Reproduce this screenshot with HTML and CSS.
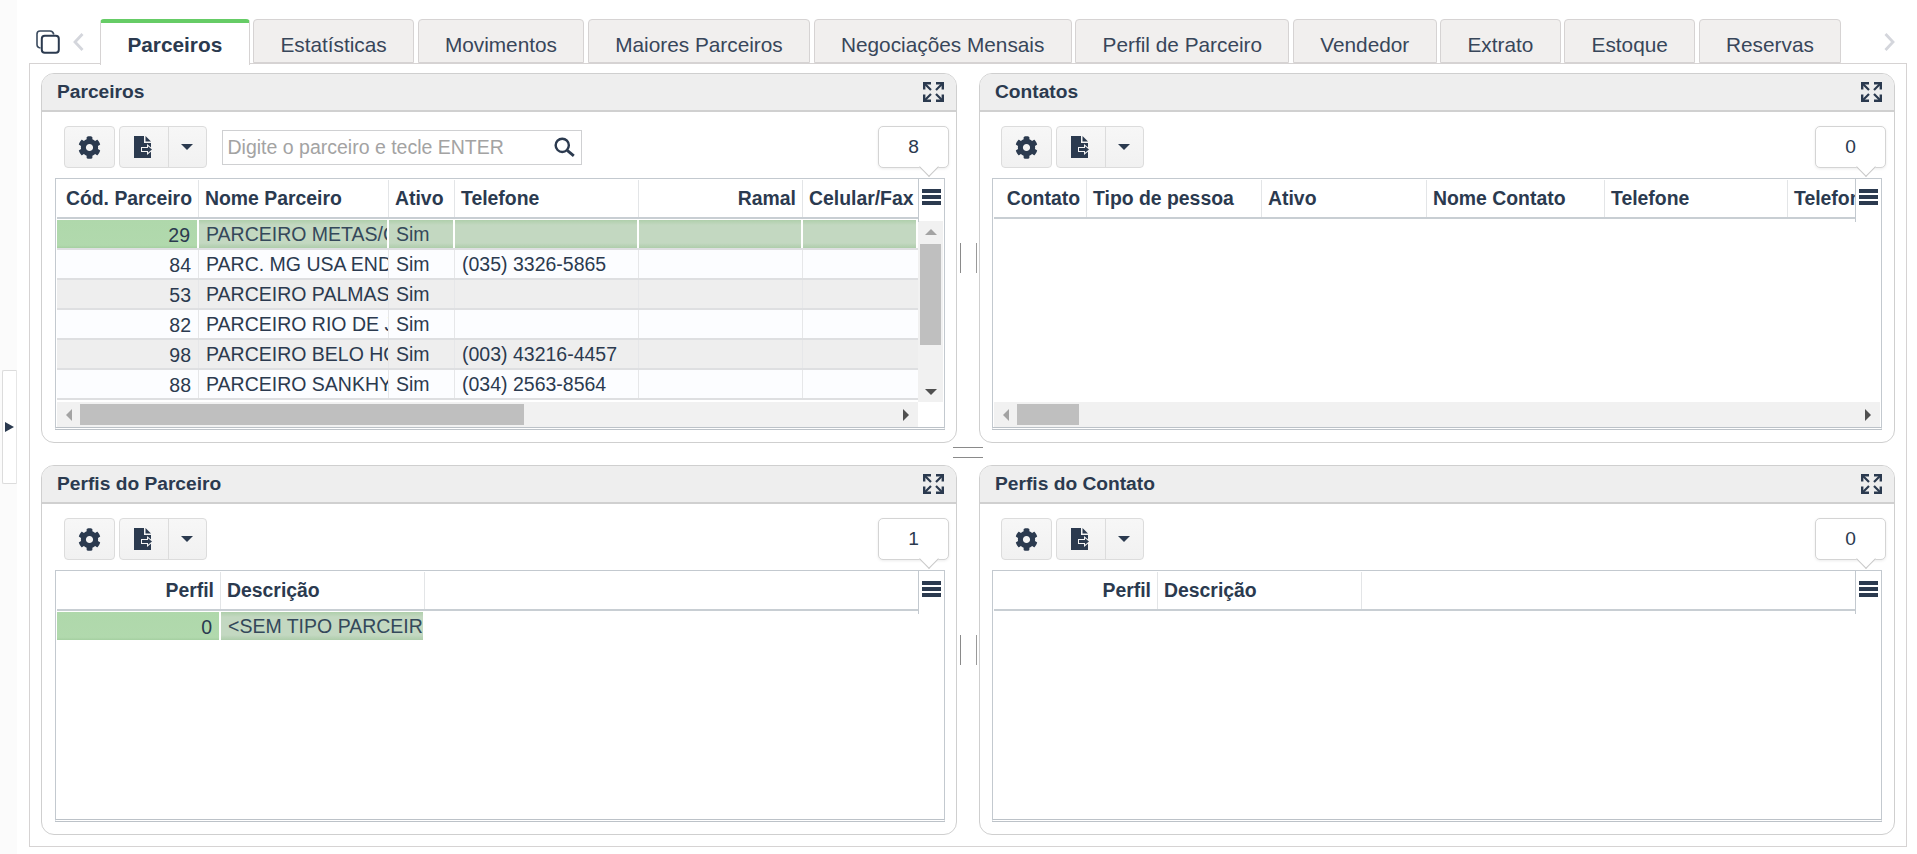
FILE: index.html
```html
<!DOCTYPE html>
<html lang="pt-BR">
<head>
<meta charset="utf-8">
<title>Parceiros</title>
<link rel="stylesheet" href="styles.css">
</head>
<body>
<svg class="sprite" aria-hidden="true">
  <symbol id="i-gear" viewBox="0 0 512 512"><path d="M487.4 315.7l-42.6-24.6c4.3-23.2 4.3-47 0-70.2l42.6-24.6c4.9-2.8 7.1-8.6 5.5-14-11.1-35.6-30-67.8-54.7-94.6-3.8-4.1-10-5.1-14.8-2.3L380.8 110c-17.9-15.4-38.5-27.3-60.8-35.1V25.8c0-5.6-3.9-10.5-9.4-11.7-36.7-8.2-74.3-7.8-109.2 0-5.5 1.2-9.4 6.1-9.4 11.7V75c-22.2 7.9-42.8 19.8-60.8 35.1L88.7 85.5c-4.9-2.8-11-1.9-14.8 2.3-24.7 26.7-43.6 58.9-54.7 94.6-1.7 5.4.6 11.2 5.5 14L67.3 221c-4.3 23.2-4.3 47 0 70.2l-42.6 24.6c-4.9 2.8-7.1 8.6-5.5 14 11.1 35.6 30 67.8 54.7 94.6 3.8 4.1 10 5.1 14.8 2.3l42.6-24.6c17.9 15.4 38.5 27.3 60.8 35.1v49.2c0 5.6 3.9 10.5 9.4 11.7 36.7 8.2 74.3 7.8 109.2 0 5.5-1.2 9.4-6.1 9.4-11.7v-49.2c22.2-7.9 42.8-19.8 60.8-35.1l42.6 24.6c4.9 2.8 11 1.9 14.8-2.3 24.7-26.7 43.6-58.9 54.7-94.6 1.5-5.5-.7-11.3-5.6-14.1zM256 336c-44.1 0-80-35.9-80-80s35.9-80 80-80 80 35.9 80 80-35.9 80-80 80z"/></symbol>
  <symbol id="i-export" viewBox="0 0 20 22"><path d="M0 0H10V7H17V22H0z"/><path d="M11.5 0L17 5.5H11.5z"/><path d="M7 11H13V8L19.5 13.5L13 19V16H7z" fill="#f4f4f4"/><path d="M8 12H14V10.3L18 13.5L14 16.7V15H8z" fill="#2b3a4f"/></symbol>
  <symbol id="i-expand" viewBox="0 0 21 20"><path d="M1.2 7.5V1.2H8M13 1.2H19.8V7.5M19.8 12.5V18.8H13M8 18.8H1.2V12.5" fill="none" stroke="#2b3a4f" stroke-width="2.4"/><path d="M2 2L8 8M19 2L13 8M19 18L13 12M2 18L8 12" fill="none" stroke="#2b3a4f" stroke-width="2.2"/></symbol>
  <symbol id="i-menu" viewBox="0 0 19 16"><path d="M0 0H19V4H0zM0 6H19V10H0zM0 12H19V16H0z"/></symbol>
</svg>

<div class="page">
  <aside class="rail">
    <div class="rail-handle"><span class="rail-arrow"></span></div>
  </aside>

  <main class="workspace">
    <nav class="tabbar">
      <div class="tabbar-tools">
        <svg class="ico-copy" viewBox="0 0 24 24"><path d="M4.5 18Q1 17.5 1 14.5V4Q1 1 4 1H14Q17 1 17.8 4.5" fill="none" stroke="#3a4a5e" stroke-width="1.6"/><rect x="5.8" y="5.8" width="17" height="17" rx="3" fill="none" stroke="#2b3a4f" stroke-width="2"/></svg>
        <svg class="ico-chev" viewBox="0 0 11 18"><path d="M9.5 1L2 9L9.5 17" fill="none" stroke="#d4d6dc" stroke-width="2.8"/></svg>
      </div>
      <div class="tabs">
        <div class="tab tab-active">Parceiros</div>
        <div class="tab">Estatísticas</div>
        <div class="tab">Movimentos</div>
        <div class="tab">Maiores Parceiros</div>
        <div class="tab">Negociações Mensais</div>
        <div class="tab">Perfil de Parceiro</div>
        <div class="tab">Vendedor</div>
        <div class="tab">Extrato</div>
        <div class="tab">Estoque</div>
        <div class="tab">Reservas</div>
      </div>
      <svg class="ico-chev ico-next" viewBox="0 0 11 18"><path d="M1.5 1L9 9L1.5 17" fill="none" stroke="#d4d6dc" stroke-width="2.8"/></svg>
    </nav>

    <section class="board">
      <!-- Parceiros -->
      <article class="panel panel-left">
        <header class="panel-head"><h2>Parceiros</h2><svg class="ico-expand"><use href="#i-expand"/></svg></header>
        <div class="panel-body">
          <div class="toolbar">
            <button class="btn btn-gear"><svg class="ico-gear"><use href="#i-gear"/></svg></button>
            <div class="btn-group">
              <button class="btn-part btn-export"><svg class="ico-export"><use href="#i-export"/></svg></button>
              <button class="btn-part btn-caret"><span class="caret"></span></button>
            </div>
            <div class="search">
              <span class="search-text">Digite o parceiro e tecle ENTER</span>
              <svg class="ico-search" viewBox="0 0 20 18"><circle cx="7.5" cy="7.5" r="6" fill="none" stroke="#2b3a4f" stroke-width="2.2"/><path d="M12 12L18 17" stroke="#2b3a4f" stroke-width="2.6"/></svg>
            </div>
            <div class="count">8</div>
          </div>
          <div class="grid">
            <div class="ghead">
              <div class="gcols">
                <div class="hc r w-cod">Cód. Parceiro</div>
                <div class="hc w-nome">Nome Parceiro</div>
                <div class="hc w-ativo">Ativo</div>
                <div class="hc w-tel">Telefone</div>
                <div class="hc r w-ramal">Ramal</div>
                <div class="hc w-cel">Celular/Fax</div>
              </div>
              <div class="gmenu"><svg class="ico-menu"><use href="#i-menu"/></svg></div>
            </div>
            <div class="gmid">
              <div class="grows">
                <div class="row row-sel">
                  <div class="c r num w-cod sel-key">29</div>
                  <div class="c w-nome sel">PARCEIRO METAS/CONTRATO</div>
                  <div class="c w-ativo sel">Sim</div>
                  <div class="c w-tel sel"></div>
                  <div class="c w-ramal sel"></div>
                  <div class="c w-cel sel"></div>
                </div>
                <div class="row">
                  <div class="c r num w-cod">84</div>
                  <div class="c w-nome">PARC. MG USA ENDEREÇO</div>
                  <div class="c w-ativo">Sim</div>
                  <div class="c w-tel">(035) 3326-5865</div>
                  <div class="c w-ramal"></div>
                  <div class="c w-cel"></div>
                </div>
                <div class="row row-alt">
                  <div class="c r num w-cod">53</div>
                  <div class="c w-nome">PARCEIRO PALMAS</div>
                  <div class="c w-ativo">Sim</div>
                  <div class="c w-tel"></div>
                  <div class="c w-ramal"></div>
                  <div class="c w-cel"></div>
                </div>
                <div class="row">
                  <div class="c r num w-cod">82</div>
                  <div class="c w-nome">PARCEIRO RIO DE JANEIRO</div>
                  <div class="c w-ativo">Sim</div>
                  <div class="c w-tel"></div>
                  <div class="c w-ramal"></div>
                  <div class="c w-cel"></div>
                </div>
                <div class="row row-alt">
                  <div class="c r num w-cod">98</div>
                  <div class="c w-nome">PARCEIRO BELO HORIZONTE</div>
                  <div class="c w-ativo">Sim</div>
                  <div class="c w-tel">(003) 43216-4457</div>
                  <div class="c w-ramal"></div>
                  <div class="c w-cel"></div>
                </div>
                <div class="row">
                  <div class="c r num w-cod">88</div>
                  <div class="c w-nome">PARCEIRO SANKHYA</div>
                  <div class="c w-ativo">Sim</div>
                  <div class="c w-tel">(034) 2563-8564</div>
                  <div class="c w-ramal"></div>
                  <div class="c w-cel"></div>
                </div>
              </div>
              <div class="vscroll">
                <span class="arr arr-up"></span>
                <span class="vthumb"></span>
                <span class="arr arr-down"></span>
              </div>
            </div>
            <div class="hrow">
              <div class="hscroll">
                <span class="arr arr-left"></span>
                <span class="hthumb hthumb-wide"></span>
                <span class="arr arr-right"></span>
              </div>
              <div class="corner"></div>
            </div>
          </div>
        </div>
      </article>

      <div class="vsplit"></div>

      <!-- Contatos -->
      <article class="panel">
        <header class="panel-head"><h2>Contatos</h2><svg class="ico-expand"><use href="#i-expand"/></svg></header>
        <div class="panel-body">
          <div class="toolbar">
            <button class="btn btn-gear"><svg class="ico-gear"><use href="#i-gear"/></svg></button>
            <div class="btn-group">
              <button class="btn-part btn-export"><svg class="ico-export"><use href="#i-export"/></svg></button>
              <button class="btn-part btn-caret"><span class="caret"></span></button>
            </div>
            <div class="count">0</div>
          </div>
          <div class="grid">
            <div class="ghead">
              <div class="gcols">
                <div class="hc r w-contato">Contato</div>
                <div class="hc w-tipo">Tipo de pessoa</div>
                <div class="hc w-cativo">Ativo</div>
                <div class="hc w-cnome">Nome Contato</div>
                <div class="hc w-ctel">Telefone</div>
                <div class="hc w-ctel2">Telefone 2</div>
              </div>
              <div class="gmenu"><svg class="ico-menu"><use href="#i-menu"/></svg></div>
            </div>
            <div class="gmid"></div>
            <div class="hrow">
              <div class="hscroll">
                <span class="arr arr-left"></span>
                <span class="hthumb hthumb-narrow"></span>
                <span class="arr arr-right"></span>
              </div>
            </div>
          </div>
        </div>
      </article>

      <div class="hsplit-cell"></div>
      <div class="hsplit-cell"><div class="hsplit-lines"></div></div>
      <div class="hsplit-cell"></div>

      <!-- Perfis do Parceiro -->
      <article class="panel panel-left">
        <header class="panel-head"><h2>Perfis do Parceiro</h2><svg class="ico-expand"><use href="#i-expand"/></svg></header>
        <div class="panel-body">
          <div class="toolbar">
            <button class="btn btn-gear"><svg class="ico-gear"><use href="#i-gear"/></svg></button>
            <div class="btn-group">
              <button class="btn-part btn-export"><svg class="ico-export"><use href="#i-export"/></svg></button>
              <button class="btn-part btn-caret"><span class="caret"></span></button>
            </div>
            <div class="count">1</div>
          </div>
          <div class="grid">
            <div class="ghead">
              <div class="gcols">
                <div class="hc r w-perfil">Perfil</div>
                <div class="hc w-desc">Descrição</div>
              </div>
              <div class="gmenu"><svg class="ico-menu"><use href="#i-menu"/></svg></div>
            </div>
            <div class="gmid">
              <div class="grows">
                <div class="row row-sel row-plain">
                  <div class="c r num w-perfil sel-key">0</div>
                  <div class="c w-desc sel">&lt;SEM TIPO PARCEIRO&gt;</div>
                </div>
              </div>
            </div>
          </div>
        </div>
      </article>

      <div class="vsplit"></div>

      <!-- Perfis do Contato -->
      <article class="panel">
        <header class="panel-head"><h2>Perfis do Contato</h2><svg class="ico-expand"><use href="#i-expand"/></svg></header>
        <div class="panel-body">
          <div class="toolbar">
            <button class="btn btn-gear"><svg class="ico-gear"><use href="#i-gear"/></svg></button>
            <div class="btn-group">
              <button class="btn-part btn-export"><svg class="ico-export"><use href="#i-export"/></svg></button>
              <button class="btn-part btn-caret"><span class="caret"></span></button>
            </div>
            <div class="count">0</div>
          </div>
          <div class="grid">
            <div class="ghead">
              <div class="gcols">
                <div class="hc r w-perfil">Perfil</div>
                <div class="hc w-desc">Descrição</div>
              </div>
              <div class="gmenu"><svg class="ico-menu"><use href="#i-menu"/></svg></div>
            </div>
            <div class="gmid"></div>
          </div>
        </div>
      </article>
    </section>
  </main>
</div>
</body>
</html>
```

FILE: styles.css
```css
* { box-sizing: border-box; }
html, body { margin: 0; padding: 0; height: 100%; background: #fff; }
body {
  font-family: "Liberation Sans", Arial, sans-serif;
  font-size: 19.2px;
  color: #2b3a4f;
  overflow: hidden;
}
.sprite { display: none; }

.page { display: flex; height: 854px; }

/* left rail */
.rail {
  width: 17px;
  flex: none;
  background: #fbfbfb;
  display: flex;
  align-items: center;
  justify-content: flex-end;
}
.rail-handle {
  width: 15px;
  height: 114px;
  background: #fff;
  border: 1px solid #dcdcdc;
  border-right-color: #e6e6e6;
  border-radius: 2px 0 0 2px;
  display: flex;
  align-items: center;
  justify-content: center;
}
.rail-arrow {
  width: 0;
  height: 0;
  border-left: 9px solid #2b3a4f;
  border-top: 5px solid transparent;
  border-bottom: 5px solid transparent;
}

/* main */
.workspace {
  flex: none;
  width: 1878px;
  margin-left: 12px;
  padding-top: 19px;
  display: flex;
  flex-direction: column;
}

.tabbar {
  display: flex;
  height: 44px;
  position: relative;
  z-index: 1;
}
.tabbar-tools {
  width: 71px;
  flex: none;
  display: flex;
  align-items: flex-start;
  padding: 11px 0 0 7px;
}
.ico-copy { width: 24px; height: 24px; flex: none; }
.ico-chev { width: 11px; height: 18px; flex: none; margin: 3px 0 0 13px; }
.ico-next { margin: 14px 0 0 43px; }

.tabs { display: flex; gap: 3.4px; }
.tab {
  height: 44px;
  padding: 4px 26.4px 0;
  border: 1px solid #d6d3d3;
  border-radius: 4px 4px 0 0;
  background: #f1efee;
  font-size: 20.8px;
  line-height: 42px;
  color: #38465a;
  white-space: nowrap;
}
.tab-active {
  height: 46px;
  padding-top: 0;
  border-top: 4px solid #66cc66;
  border-bottom: 0;
  background: #fff;
  color: #2b3a4f;
  font-weight: 700;
  line-height: 43px;
}

.board {
  width: 1878px;
  height: 784px;
  border: 1px solid #d6d3d3;
  padding: 9px 0 0 11px;
  display: grid;
  grid-template-columns: 916px 22px 916px;
  grid-template-rows: 370px 22px 370px;
}

/* panels */
.panel {
  border: 1px solid #cfcfcf;
  border-radius: 13px;
  background: #fff;
  overflow: hidden;
  display: flex;
  flex-direction: column;
}
.panel-head {
  height: 38px;
  flex: none;
  background: #eeeeee;
  border-bottom: 2px solid #d0d0d0;
  display: flex;
  align-items: center;
  justify-content: space-between;
  padding: 0 12px 0 15px;
}
.panel-head h2 {
  margin: 0;
  font-size: 19.2px;
  font-weight: 700;
  line-height: 36px;
}
.ico-expand { width: 21px; height: 20px; flex: none; margin-top: -1px; }

.panel-body { padding: 14px 12px 0; flex: 1; min-height: 0; }
.panel-left .panel-body { padding: 14px 11px 0 13px; }

/* toolbar */
.toolbar {
  height: 42px;
  margin: 0 -4px 10px 0;
  padding: 0 0 0 9px;
  display: flex;
  align-items: center;
  position: relative;
}
.btn, .btn-group {
  height: 42px;
  background: linear-gradient(#f7f7f7, #f1f1f1);
  border: 1px solid #dcdcdc;
  border-radius: 4px;
  padding: 0;
}
.btn-gear {
  width: 51px;
  flex: none;
  display: flex;
  align-items: center;
  justify-content: center;
}
.ico-gear { width: 23px; height: 23px; fill: #2b3a4f; display: block; }
.btn-group { margin-left: 3.5px; width: 88px; flex: none; display: flex; }
.btn-part {
  background: none;
  border: 0;
  padding: 0;
  height: 40px;
  display: flex;
  align-items: center;
  justify-content: center;
}
.btn-export { width: 49px; border-right: 1px solid #dcdcdc; }
.btn-caret { flex: 1; padding-bottom: 1px; }
.ico-export { width: 20px; height: 22px; fill: #2b3a4f; display: block; }
.caret {
  width: 0; height: 0;
  border-top: 6px solid #2b3a4f;
  border-left: 6px solid transparent;
  border-right: 6px solid transparent;
}
.search {
  width: 360px;
  height: 35px;
  margin-left: 15px;
  flex: none;
  border: 1px solid #cfd0d2;
  display: flex;
  align-items: center;
  justify-content: space-between;
  padding: 0 5px 0 5px;
}
.search-text { color: #a3a3a3; font-size: 19.5px; white-space: nowrap; }
.ico-search { width: 22px; height: 20px; flex: none; }

.count {
  margin-left: auto;
  width: 71px;
  height: 42px;
  background: #fff;
  border: 1px solid #d4d4d4;
  border-radius: 5px;
  box-shadow: 0 1px 3px rgba(0,0,0,.08);
  text-align: center;
  line-height: 40px;
  font-size: 19.2px;
  position: relative;
}
.count::after {
  content: "";
  position: absolute;
  right: 12px;
  bottom: -7px;
  width: 13px;
  height: 13px;
  background: #fff;
  border-right: 1px solid #c8c8c8;
  border-bottom: 1px solid #c8c8c8;
  transform: rotate(45deg);
}

/* grids */
.grid {
  height: 252px;
  border: 1px solid #c3c9cf;
  border-top-width: 1.5px;
  border-bottom: 3px double #bcc2c8;
  padding: 0 1px;
  display: flex;
  flex-direction: column;
  background: #fff;
}
.ghead { height: 40px; flex: none; display: flex; position: relative; }
.gcols {
  flex: 1;
  min-width: 0;
  display: flex;
  border-bottom: 2px solid #c8ced3;
  overflow: hidden;
}
.hc {
  flex: none;
  height: 38px;
  line-height: 36px;
  margin-top: 1px;
  padding: 0 6px;
  font-size: 19.4px;
  font-weight: 700;
  border-right: 1px solid #e3e5e7;
  white-space: nowrap;
  overflow: hidden;
}
.r { text-align: right; }
.gmenu {
  width: 25px;
  flex: none;
  height: 43px;
  margin-bottom: -3px;
  border-left: 1px solid #c3c9cf;
  padding: 10px 0 0 3px;
  position: relative;
  z-index: 1;
}
.ico-menu { width: 19px; height: 16px; fill: #2b3a4f; display: block; }

.gmid { flex: 1; min-height: 0; display: flex; }
.grows { flex: 1; min-width: 0; }
.row {
  display: flex;
  height: 30px;
  background: #fcfdff;
  border-bottom: 2px solid #dedfe1;
}
.row-alt { background: #eeeeee; }
.row-sel { background: #fff; padding-top: 1px; height: 31px; }
.row-plain { border-bottom: 0; }
.c {
  flex: none;
  height: 100%;
  padding: 0 7px;
  font-size: 19.5px;
  line-height: 28px;
  border-right: 1px solid #e6e7e9;
  white-space: nowrap;
  overflow: hidden;
}
.num { padding-top: 1px; }
.row-sel .c { border-right: 2px solid #fff; line-height: 28px; height: 28px; }
.sel-key { background: linear-gradient(#afd8ab, #b1d9ad 90%, #a5cfa1); }
.sel {
  background: linear-gradient(#afcfab, #c3d8c1 18%, #c3d8c1 82%, #aecdab);
  color: #34485a;
}

.w-cod { width: 142px; }
.w-nome { width: 190px; }
.w-ativo { width: 66px; }
.w-tel { width: 184px; }
.w-ramal { width: 164px; }
.w-cel { width: 115px; border-right: 0; }
.w-contato { width: 93px; }
.w-tipo { width: 175px; }
.w-cativo { width: 165px; }
.w-cnome { width: 178px; }
.w-ctel { width: 183px; }
.w-ctel2 { width: 68px; border-right: 0; }
.w-perfil { width: 164px; }
.w-desc { width: 204px; }

/* scrollbars */
.vscroll {
  width: 25px;
  flex: none;
  margin-top: 2px;
  background: #f1f1f1;
  display: flex;
  flex-direction: column;
  align-items: center;
  position: relative;
}
.vthumb { width: 21px; height: 101px; margin-top: 9px; background: #bfbfbf; }
.arr { width: 0; height: 0; display: block; flex: none; }
.arr-up {
  margin-top: 8px;
  border-bottom: 6px solid #a3a3a3;
  border-left: 6px solid transparent;
  border-right: 6px solid transparent;
}
.arr-down {
  margin-top: auto;
  margin-bottom: 7px;
  border-top: 6px solid #505050;
  border-left: 6px solid transparent;
  border-right: 6px solid transparent;
}
.hrow { height: 25px; flex: none; display: flex; }
.hscroll {
  flex: 1;
  min-width: 0;
  background: #f1f1f1;
  display: flex;
  align-items: center;
  padding: 0 9px 0 9px;
}
.hthumb { height: 21px; background: #bfbfbf; margin-left: 8px; }
.hthumb-wide { width: 444px; }
.hthumb-narrow { width: 62px; }
.arr-left {
  border-right: 6px solid #a3a3a3;
  border-top: 6px solid transparent;
  border-bottom: 6px solid transparent;
}
.arr-right {
  margin-left: auto;
  border-left: 6px solid #505050;
  border-top: 6px solid transparent;
  border-bottom: 6px solid transparent;
}
.corner { width: 25px; flex: none; background: #fff; }

/* splitters */
.vsplit {
  display: flex;
  align-items: center;
  justify-content: center;
}
.vsplit::before {
  content: "";
  width: 15px;
  height: 30px;
  border-left: 1px solid #8a8a8a;
  border-right: 1px solid #9a9a9a;
}
.hsplit-cell { display: flex; justify-content: center; }
.hsplit-lines {
  width: 30px;
  height: 11px;
  flex: none;
  margin-top: 4px;
  border-top: 1px solid #8a8a8a;
  border-bottom: 1px solid #8a8a8a;
}
```
